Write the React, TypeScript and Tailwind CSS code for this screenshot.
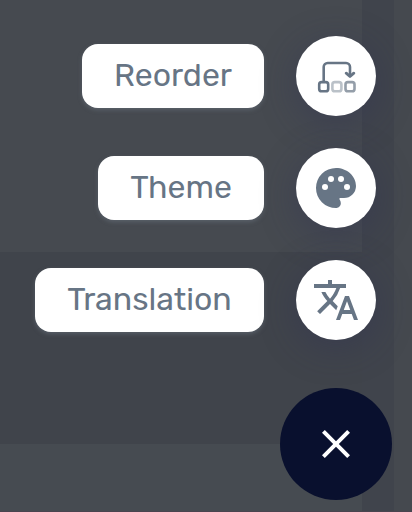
import React from 'react';

function ReorderIcon() {
  return (
    <svg className="h-12 w-12" viewBox="0 0 48 48" fill="none" stroke="#677585" strokeWidth="2.6" strokeLinecap="round" strokeLinejoin="round">
      <path d="M11.7 29.5V15a4 4 0 0 1 4-4h18.3a4 4 0 0 1 4 4v8" />
      <path d="M34.2 21.2l3.8 3.3 3.8-3.3" strokeWidth="2.9" />
      <rect x="7.2" y="30.1" width="9" height="9.2" rx="2.4" />
      <rect x="20.4" y="30.1" width="9" height="9.2" rx="2.4" opacity=".45" />
      <rect x="33.5" y="30.1" width="9" height="9.2" rx="2.4" opacity=".7" />
    </svg>
  );
}

function PaletteIcon() {
  return (
    <svg className="h-12 w-12" viewBox="0 0 24 24">
      <path fill="#677585" d="M12 22A10 10 0 0 1 2 12 10 10 0 0 1 12 2c5.5 0 10 4 10 9a6 6 0 0 1-6 6h-1.8c-.3 0-.5.2-.5.5 0 .1.1.2.1.3.4.5.6 1.1.6 1.7.1 1.4-1 2.5-2.4 2.5" />
      <g fill="#fff">
        <circle cx="6.5" cy="11.5" r="1.5" />
        <circle cx="9.5" cy="7.5" r="1.5" />
        <circle cx="14.5" cy="7.5" r="1.5" />
        <circle cx="17.5" cy="11.5" r="1.5" />
      </g>
    </svg>
  );
}

function TranslateIcon() {
  return (
    <svg className="h-12 w-12" viewBox="0 0 24 24" fill="#677585">
      <path d="M12.87 15.07l-2.54-2.51.03-.03A17.52 17.52 0 0 0 14.07 6H17V4h-7V2H8v2H1v2h11.17C11.5 7.92 10.44 9.75 9 11.35 8.07 10.32 7.3 9.19 6.69 8h-2c.73 1.63 1.73 3.17 2.98 4.56l-5.09 5.02L4 19l5-5 3.11 3.11.76-2.04zM18.5 10h-2L12 22h2l1.12-3h4.75L21 22h2l-4.5-12zm-2.62 7l1.62-4.33L19.12 17h-3.24z" />
    </svg>
  );
}

const actions = [
  { label: 'Reorder', width: 'w-[182px]', icon: <ReorderIcon /> },
  { label: 'Theme', width: 'w-[166px]', icon: <PaletteIcon /> },
  { label: 'Translation', width: 'w-[229px]', icon: <TranslateIcon /> },
];

export default function App() {
  return (
    <div className="relative h-[512px] w-[412px] overflow-hidden bg-[#464a51] font-['Rubik','Roboto',sans-serif]">
      <div className="flex h-full border-b border-[#49444f]">
        <div className="flex w-[362px] flex-col">
          <div className="h-[252px] bg-[#464a50]" />
          <div className="h-48 bg-[#40444b]" />
          <div className="flex-1 bg-[#464b51]" />
        </div>
        <div className="w-8 bg-[#40444c]" />
        <div className="flex-1 bg-[#45494f]" />
      </div>
      <div className="absolute inset-0 flex flex-col items-end pt-9">
        <div className="flex flex-col items-end gap-8 pr-9">
          {actions.map((a) => (
            <div key={a.label} className="flex items-center gap-8">
              <span className={`flex h-16 items-center justify-center rounded-[16px] bg-white pb-0.5 text-[32px] leading-none text-[#677585] shadow-[0_2px_4px_rgba(110,120,132,0.5)] ${a.width}`}>
                {a.label}
              </span>
              <button aria-label={a.label} className="flex h-20 w-20 items-center justify-center rounded-full bg-white shadow-[0_8px_36px_rgba(45,47,85,0.4)]">
                {a.icon}
              </button>
            </div>
          ))}
        </div>
        <button aria-label="Close" className="mt-12 mr-5 flex h-28 w-28 items-center justify-center rounded-full bg-[#09102e]">
          <svg className="h-12 w-12" viewBox="0 0 24 24" fill="#fff">
            <path d="M19 6.41L17.59 5 12 10.59 6.41 5 5 6.41 10.59 12 5 17.59 6.41 19 12 13.41 17.59 19 19 17.59 13.41 12z" />
          </svg>
        </button>
      </div>
    </div>
  );
}
